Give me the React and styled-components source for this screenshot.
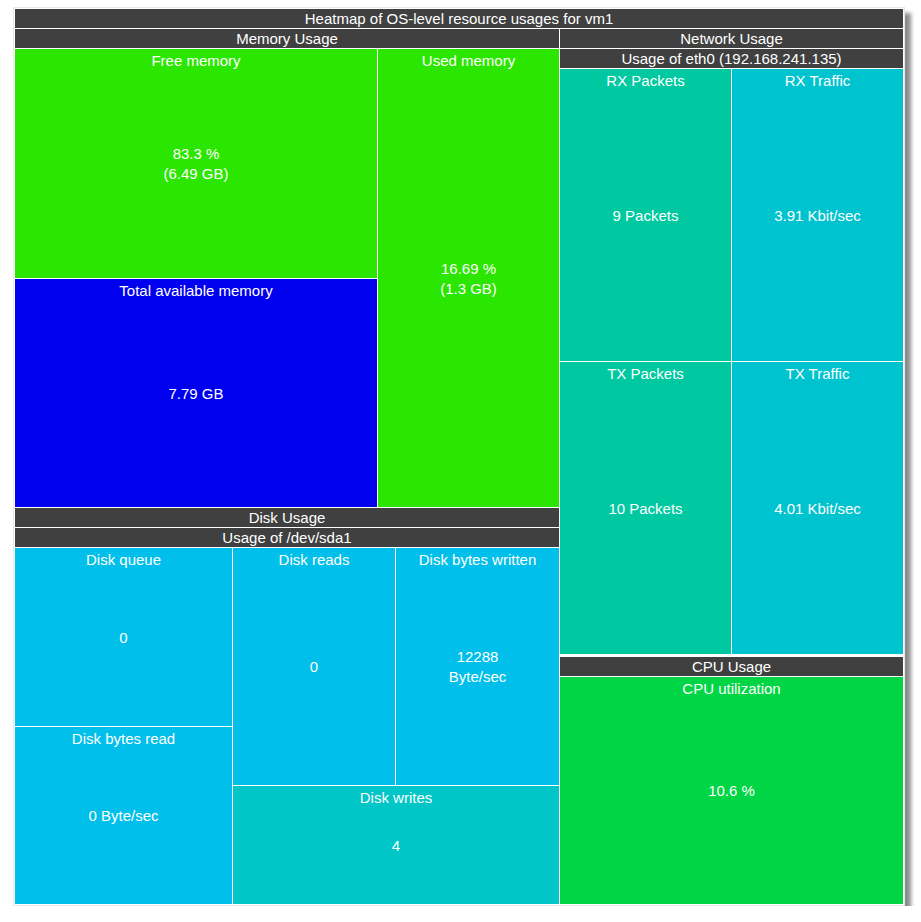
import React from "react";
import styled, { createGlobalStyle } from "styled-components";

const Global = createGlobalStyle`
  body { margin: 0; background: #fff; font-family: "Liberation Sans", Arial, sans-serif; }
`;

const Frame = styled.div`
  margin: 7px 0 0 13px;
  width: 892px;
  height: 899px;
  box-sizing: border-box;
  padding: 1px;
  background: #fff;
  border: 1px solid #e8e8e8;
  box-shadow: 6px 6px 4px #8c8c8c;
  display: flex;
  flex-direction: column;
  gap: 1px;
`;

const Header = styled.div`
  flex: 0 0 19px;
  background: #404040;
  color: #fff;
  font-size: 15px;
  line-height: 19px;
  text-align: center;
  white-space: nowrap;
`;

const Stack = styled.div`
  display: flex;
  flex-direction: ${(p) => (p.row ? "row" : "column")};
  gap: ${(p) => p.gap || 1}px;
  flex: ${(p) => (p.size ? `0 0 ${p.size}px` : "1 1 0")};
  min-width: 0;
  min-height: 0;
  background: #fff;
`;

const Cell = styled.div`
  flex: ${(p) => (p.size ? `0 0 ${p.size}px` : "1 1 0")};
  background: ${(p) => p.color};
  color: #fff;
  font-size: 15px;
  display: flex;
  flex-direction: column;
  align-items: center;
  text-align: center;
  min-width: 0;
`;

const Label = styled.div`
  padding-top: 2px;
  line-height: 19px;
  white-space: nowrap;
`;

const Value = styled.div`
  flex: 1;
  display: flex;
  flex-direction: column;
  justify-content: center;
  line-height: 20px;
  padding-bottom: 20px;
`;

const Box = ({ label, lines, ...rest }) => (
  <Cell {...rest}>
    <Label>{label}</Label>
    <Value>
      {lines.map((l) => (
        <div key={l}>{l}</div>
      ))}
    </Value>
  </Cell>
);

const DISK = "#00bfea";
const TEAL = "#00c9a1";
const CYAN = "#00c3d0";

export default function App() {
  return (
    <>
      <Global />
      <Frame>
        <Header>Heatmap of OS-level resource usages for vm1</Header>
        <Stack row>
          <Stack size={544}>
            <Stack size={478}>
              <Header>Memory Usage</Header>
              <Stack row>
                <Stack size={362}>
                  <Box size={229} color="#2be600" label="Free memory" lines={["83.3 %", "(6.49 GB)"]} />
                  <Box color="#0000ee" label="Total available memory" lines={["7.79 GB"]} />
                </Stack>
                <Box color="#2be600" label="Used memory" lines={["16.69 %", "(1.3 GB)"]} />
              </Stack>
            </Stack>
            <Stack>
              <Header>Disk Usage</Header>
              <Header>Usage of /dev/sda1</Header>
              <Stack row>
                <Stack size={217}>
                  <Box size={178} color={DISK} label="Disk queue" lines={["0"]} />
                  <Box color={DISK} label="Disk bytes read" lines={["0 Byte/sec"]} />
                </Stack>
                <Stack>
                  <Stack row size={237}>
                    <Box size={162} color={DISK} label="Disk reads" lines={["0"]} />
                    <Box color={DISK} label="Disk bytes written" lines={["12288", "Byte/sec"]} />
                  </Stack>
                  <Box color="#00c6c8" label="Disk writes" lines={["4"]} />
                </Stack>
              </Stack>
            </Stack>
          </Stack>
          <Stack gap={3}>
            <Stack size={625}>
              <Header>Network Usage</Header>
              <Header>Usage of eth0 (192.168.241.135)</Header>
              <Stack>
                <Stack row size={292}>
                  <Box size={171} color={TEAL} label="RX Packets" lines={["9 Packets"]} />
                  <Box color={CYAN} label="RX Traffic" lines={["3.91 Kbit/sec"]} />
                </Stack>
                <Stack row>
                  <Box size={171} color={TEAL} label="TX Packets" lines={["10 Packets"]} />
                  <Box color={CYAN} label="TX Traffic" lines={["4.01 Kbit/sec"]} />
                </Stack>
              </Stack>
            </Stack>
            <Stack>
              <Header>CPU Usage</Header>
              <Box color="#00d645" label="CPU utilization" lines={["10.6 %"]} />
            </Stack>
          </Stack>
        </Stack>
      </Frame>
    </>
  );
}
